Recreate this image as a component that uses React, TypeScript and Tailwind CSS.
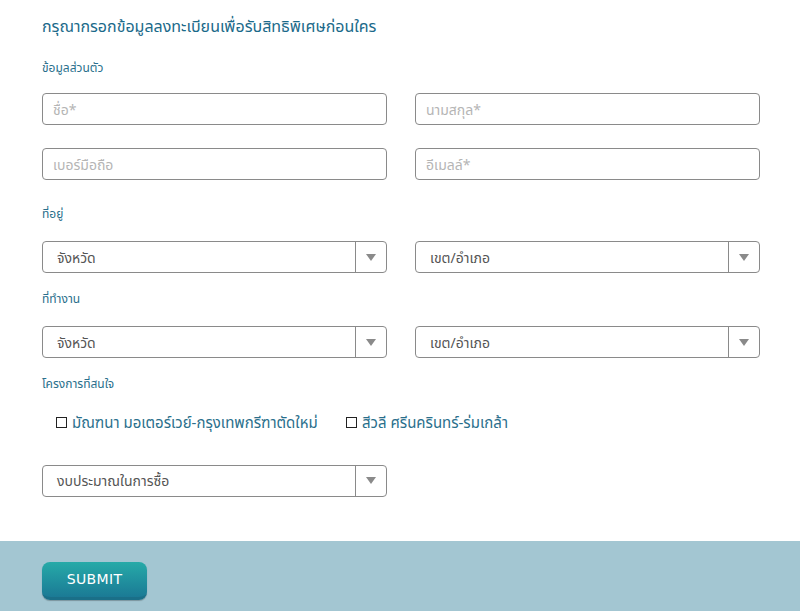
import React from "react";

const font = { fontFamily: '"Noto Sans", "Noto Sans Thai", "DejaVu Sans", sans-serif' };

function TextInput({ placeholder }: { placeholder: string }) {
  return (
    <input
      placeholder={placeholder}
      className="w-[345px] h-[32px] rounded-[4px] border border-[#8a8a8a] px-[10px] text-[14px] text-[#555] placeholder:text-[#b5b5b5] outline-none bg-white"
    />
  );
}

function Select({ label }: { label: string }) {
  return (
    <div className="w-[345px] shrink-0 h-[32px] rounded-[4px] border border-[#8a8a8a] flex items-center bg-white">
      <div className="flex-1 pl-[14px] text-[14px] text-[#555]">{label}</div>
      <div className="w-[31px] h-full border-l border-[#8a8a8a] flex items-center justify-center">
        <svg width="10" height="7" viewBox="0 0 10 7">
          <path d="M0 0 L10 0 L5 7 Z" fill="#8a8a8a" />
        </svg>
      </div>
    </div>
  );
}

function Label({ children }: { children: React.ReactNode }) {
  return <div className="text-[12px] text-[#2a6f8c] leading-none">{children}</div>;
}

export default function App() {
  return (
    <div className="w-[800px] h-[611px] bg-white flex flex-col" style={font}>
      <div className="flex-1 px-[42px] pt-[16px]">
        <h1 className="text-[16px] text-[#1b6a8a] leading-[20px]">
          กรุณากรอกข้อมูลลงทะเบียนเพื่อรับสิทธิพิเศษก่อนใคร
        </h1>
        <div className="mt-[26px]">
          <Label>ข้อมูลส่วนตัว</Label>
        </div>
        <div className="mt-[19px] grid grid-cols-[345px_345px] gap-x-[28px] gap-y-[23px]">
          <TextInput placeholder="ชื่อ*" />
          <TextInput placeholder="นามสกุล*" />
          <TextInput placeholder="เบอร์มือถือ" />
          <TextInput placeholder="อีเมลล์*" />
        </div>
        <div className="mt-[28px]">
          <Label>ที่อยู่</Label>
        </div>
        <div className="mt-[21px] flex gap-[28px]">
          <Select label="จังหวัด" />
          <Select label="เขต/อำเภอ" />
        </div>
        <div className="mt-[20px]">
          <Label>ที่ทำงาน</Label>
        </div>
        <div className="mt-[21px] flex gap-[28px]">
          <Select label="จังหวัด" />
          <Select label="เขต/อำเภอ" />
        </div>
        <div className="mt-[20px]">
          <Label>โครงการที่สนใจ</Label>
        </div>
        <div className="mt-[21px] pl-[14px] flex items-center text-[15px] text-[#2a6f8c]">
          <label className="w-[290px] flex items-center gap-[5px]">
            <span className="w-[11px] h-[11px] border border-[#222] inline-block" />
            มัณฑนา มอเตอร์เวย์-กรุงเทพกรีฑาตัดใหม่
          </label>
          <label className="flex items-center gap-[5px]">
            <span className="w-[11px] h-[11px] border border-[#222] inline-block" />
            สีวลี ศรีนครินทร์-ร่มเกล้า
          </label>
        </div>
        <div className="mt-[31px]">
          <Select label="งบประมาณในการซื้อ" />
        </div>
      </div>
      <div className="h-[70px] bg-[#a3c6d2] px-[42px] pt-[21px]">
        <button
          className="w-[105px] h-[38px] rounded-[8px] bg-gradient-to-b from-[#27aaa8] to-[#1b7a95] border-b-[3px] border-[#1a6f88] shadow-[0_1px_1px_rgba(0,0,0,0.25)] text-white text-[14px] tracking-wide"
          style={{ fontFamily: '"DejaVu Sans", sans-serif' }}
        >
          SUBMIT
        </button>
      </div>
    </div>
  );
}
